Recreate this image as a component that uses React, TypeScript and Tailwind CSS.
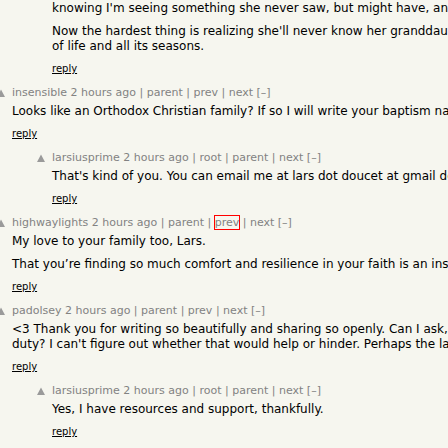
import React from "react";

type Meta = { user: string; links: string[]; boxed?: string };

function VoteArrow() {
  return (
    <svg width="8" height="8" viewBox="0 0 8 8" className="block">
      <polygon points="0,8 4,0.5 8,8" fill="#9a9a9a" />
    </svg>
  );
}

function Comhead({ meta }: { meta: Meta }) {
  return (
    <div className="h-[13px] text-[11px] leading-[13px] text-[#828282] whitespace-nowrap">
      {meta.user} 2 hours ago
      {meta.links.map((l) => (
        <span key={l}>
          {" | "}
          {l === meta.boxed ? (
            <span className="outline outline-[#ff0000] outline-offset-0">{l}</span>
          ) : (
            l
          )}
        </span>
      ))}
      {" | next "}
      <span>[–]</span>
    </div>
  );
}

function Reply() {
  return (
    <div className="mt-[9px] h-[12px] text-[10px] leading-[12px] text-black">
      <u>reply</u>
    </div>
  );
}

function Comment({
  depth,
  meta,
  paras,
  first,
}: {
  depth: 1 | 2;
  meta?: Meta;
  paras: string[][];
  first?: boolean;
}) {
  return (
    <div className={`flex ${depth === 2 ? "ml-[35px]" : "-ml-[5px]"} ${first ? "pt-px" : "mt-[11px]"}`}>
      <div className="w-[17px] shrink-0 pl-[2px] pt-[3px]">{meta && <VoteArrow />}</div>
      <div>
        {meta && <Comhead meta={meta} />}
        <div className={`${meta ? "mt-[5px]" : ""} text-[12px] leading-[15px] text-black`}>
          {paras.map((lines, i) => (
            <div key={i} className={i > 0 ? "mt-[8px]" : ""}>
              {lines.map((line, j) => (
                <div key={j} className="whitespace-nowrap">
                  {line}
                </div>
              ))}
            </div>
          ))}
        </div>
        <Reply />
      </div>
    </div>
  );
}

export default function App() {
  return (
    <div className="w-[448px] h-[448px] overflow-hidden bg-[#f6f6ef] font-['DejaVu_Sans',Verdana,sans-serif]">
      <Comment
        first
        depth={2}
        paras={[
          ["knowing I'm seeing something she never saw, but might have, and that's enough for me."],
          [
            "Now the hardest thing is realizing she'll never know her granddaughter, and that is part",
            "of life and all its seasons.",
          ],
        ]}
      />
      <Comment
        depth={1}
        meta={{ user: "insensible", links: ["parent", "prev"] }}
        paras={[["Looks like an Orthodox Christian family? If so I will write your baptism names in my prayers."]]}
      />
      <Comment
        depth={2}
        meta={{ user: "larsiusprime", links: ["root", "parent"] }}
        paras={[["That's kind of you. You can email me at lars dot doucet at gmail dot com."]]}
      />
      <Comment
        depth={1}
        meta={{ user: "highwaylights", links: ["parent", "prev"], boxed: "prev" }}
        paras={[
          ["My love to your family too, Lars."],
          ["That you’re finding so much comfort and resilience in your faith is an inspiration."],
        ]}
      />
      <Comment
        depth={1}
        meta={{ user: "padolsey", links: ["parent", "prev"] }}
        paras={[
          [
            "<3 Thank you for writing so beautifully and sharing so openly. Can I ask, is there a",
            "duty? I can't figure out whether that would help or hinder. Perhaps the latter.",
          ],
        ]}
      />
      <Comment
        depth={2}
        meta={{ user: "larsiusprime", links: ["root", "parent"] }}
        paras={[["Yes, I have resources and support, thankfully."]]}
      />
    </div>
  );
}
